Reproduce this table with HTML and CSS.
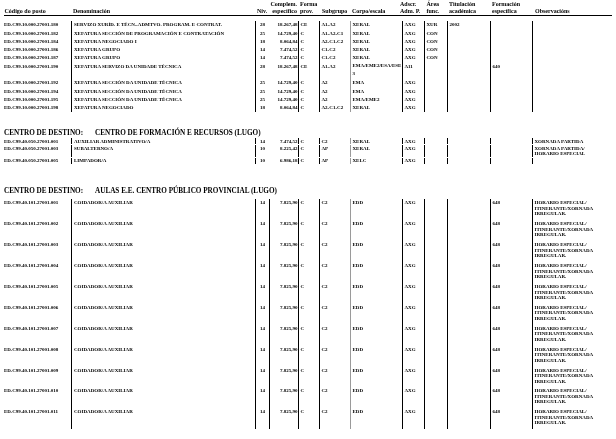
FILE: index.html
```html
<!DOCTYPE html>
<html lang="gl">
<head>
<meta charset="utf-8">
<title>Relación de postos</title>
<link rel="stylesheet" href="styles.css">
</head>
<body>
<div class="page">
  <div class="grid head">
    <div class="h code"><span>&nbsp;</span><span>Código do posto</span></div>
    <div class="h den"><span>&nbsp;</span><span>Denominación</span></div>
    <div class="h niv"><span>&nbsp;</span><span>Niv.</span></div>
    <div class="h cmp"><span>Complem.</span><span>específico</span></div>
    <div class="h fp"><span>Forma</span><span>prov.</span></div>
    <div class="h sg"><span>&nbsp;</span><span>Subgrupo</span></div>
    <div class="h ce"><span>&nbsp;</span><span>Corpo/escala</span></div>
    <div class="h ad"><span>Adscr.</span><span>Adm. P.</span></div>
    <div class="h ar"><span>Área</span><span>func.</span></div>
    <div class="h ti"><span>Titulación</span><span>académica</span></div>
    <div class="h fe"><span>Formación</span><span>específica</span></div>
    <div class="h ob"><span>&nbsp;</span><span>Observacións</span></div>
  </div>

  <div class="block b1">
    <div class="grid row"><span class="c code">ED.C99.10.000.27001.180</span><span class="c den">SERVIZO XURÍD. E TÉCN.-ADMTVO. PROGRAM. E CONTRAT.</span><span class="c niv">28</span><span class="c cmp">18.267,48</span><span class="c fp">CE</span><span class="c sg">A1-A2</span><span class="c ce">XERAL</span><span class="c ad">AXG</span><span class="c ar">XUR</span><span class="c ti">2002</span><span class="c fe"></span><span class="c ob"></span></div>
    <div class="grid row"><span class="c code">ED.C99.10.000.27001.182</span><span class="c den">XEFATURA SECCIÓN DE PROGRAMACIÓN E CONTRATACIÓN</span><span class="c niv">25</span><span class="c cmp">14.729,40</span><span class="c fp">C</span><span class="c sg">A1-A2-C1</span><span class="c ce">XERAL</span><span class="c ad">AXG</span><span class="c ar">CON</span><span class="c ti"></span><span class="c fe"></span><span class="c ob"></span></div>
    <div class="grid row"><span class="c code">ED.C99.10.000.27001.184</span><span class="c den">XEFATURA NEGOCIADO I</span><span class="c niv">18</span><span class="c cmp">8.064,84</span><span class="c fp">C</span><span class="c sg">A2-C1-C2</span><span class="c ce">XERAL</span><span class="c ad">AXG</span><span class="c ar">CON</span><span class="c ti"></span><span class="c fe"></span><span class="c ob"></span></div>
    <div class="grid row"><span class="c code">ED.C99.10.000.27001.186</span><span class="c den">XEFATURA GRUPO</span><span class="c niv">14</span><span class="c cmp">7.474,52</span><span class="c fp">C</span><span class="c sg">C1-C2</span><span class="c ce">XERAL</span><span class="c ad">AXG</span><span class="c ar">CON</span><span class="c ti"></span><span class="c fe"></span><span class="c ob"></span></div>
    <div class="grid row"><span class="c code">ED.C99.10.000.27001.187</span><span class="c den">XEFATURA GRUPO</span><span class="c niv">14</span><span class="c cmp">7.474,52</span><span class="c fp">C</span><span class="c sg">C1-C2</span><span class="c ce">XERAL</span><span class="c ad">AXG</span><span class="c ar">CON</span><span class="c ti"></span><span class="c fe"></span><span class="c ob"></span></div>
    <div class="grid row tall"><span class="c code">ED.C99.10.000.27001.190</span><span class="c den">XEFATURA SERVIZO DA UNIDADE TÉCNICA</span><span class="c niv">28</span><span class="c cmp">18.267,48</span><span class="c fp">CE</span><span class="c sg">A1-A2</span><span class="c ce wrap">EMA/EME2/ESA/ESE<br>3</span><span class="c ad">A11</span><span class="c ar"></span><span class="c ti"></span><span class="c fe">640</span><span class="c ob"></span></div>
    <div class="grid row"><span class="c code">ED.C99.10.000.27001.192</span><span class="c den">XEFATURA SECCIÓN DA UNIDADE TÉCNICA</span><span class="c niv">25</span><span class="c cmp">14.729,40</span><span class="c fp">C</span><span class="c sg">A2</span><span class="c ce">EMA</span><span class="c ad">AXG</span><span class="c ar"></span><span class="c ti"></span><span class="c fe"></span><span class="c ob"></span></div>
    <div class="grid row"><span class="c code">ED.C99.10.000.27001.194</span><span class="c den">XEFATURA SECCIÓN DA UNIDADE TÉCNICA</span><span class="c niv">25</span><span class="c cmp">14.729,40</span><span class="c fp">C</span><span class="c sg">A2</span><span class="c ce">EMA</span><span class="c ad">AXG</span><span class="c ar"></span><span class="c ti"></span><span class="c fe"></span><span class="c ob"></span></div>
    <div class="grid row"><span class="c code">ED.C99.10.000.27001.195</span><span class="c den">XEFATURA SECCIÓN DA UNIDADE TÉCNICA</span><span class="c niv">25</span><span class="c cmp">14.729,40</span><span class="c fp">C</span><span class="c sg">A2</span><span class="c ce">EMA/EME2</span><span class="c ad">AXG</span><span class="c ar"></span><span class="c ti"></span><span class="c fe"></span><span class="c ob"></span></div>
    <div class="grid row"><span class="c code">ED.C99.10.000.27001.198</span><span class="c den">XEFATURA NEGOCIADO</span><span class="c niv">18</span><span class="c cmp">8.064,84</span><span class="c fp">C</span><span class="c sg">A2-C1-C2</span><span class="c ce">XERAL</span><span class="c ad">AXG</span><span class="c ar"></span><span class="c ti"></span><span class="c fe"></span><span class="c ob"></span></div>
  </div>

  <div class="centro c1"><span class="lbl">CENTRO DE DESTINO:</span><span>CENTRO DE FORMACIÓN E RECURSOS (LUGO)</span></div>
  <div class="block b2">
    <div class="grid row"><span class="c code">ED.C99.40.050.27001.001</span><span class="c den">AUXILIAR ADMINISTRATIVO/A</span><span class="c niv">14</span><span class="c cmp">7.474,52</span><span class="c fp">C</span><span class="c sg">C2</span><span class="c ce">XERAL</span><span class="c ad">AXG</span><span class="c ar"></span><span class="c ti"></span><span class="c fe"></span><span class="c ob">XORNADA PARTIDA</span></div>
    <div class="grid row two"><span class="c code">ED.C99.40.050.27001.003</span><span class="c den">SUBALTERNO/A</span><span class="c niv">10</span><span class="c cmp">8.225,42</span><span class="c fp">C</span><span class="c sg">AP</span><span class="c ce">XERAL</span><span class="c ad">AXG</span><span class="c ar"></span><span class="c ti"></span><span class="c fe"></span><span class="c ob">XORNADA PARTIDA/<br>HORARIO ESPECIAL</span></div>
    <div class="grid row"><span class="c code">ED.C99.40.050.27001.005</span><span class="c den">LIMPADOR/A</span><span class="c niv">10</span><span class="c cmp">6.986,18</span><span class="c fp">C</span><span class="c sg">AP</span><span class="c ce">XELC</span><span class="c ad">AXG</span><span class="c ar"></span><span class="c ti"></span><span class="c fe"></span><span class="c ob"></span></div>
  </div>

  <div class="centro c2"><span class="lbl">CENTRO DE DESTINO:</span><span>AULAS E.E. CENTRO PÚBLICO PROVINCIAL (LUGO)</span></div>
  <div class="block b3">
    <div class="grid row"><span class="c code">ED.C99.40.101.27001.001</span><span class="c den">COIDADOR/A AUXILIAR</span><span class="c niv">14</span><span class="c cmp">7.825,90</span><span class="c fp">C</span><span class="c sg">C2</span><span class="c ce">EDD</span><span class="c ad">AXG</span><span class="c ar"></span><span class="c ti"></span><span class="c fe">648</span><span class="c ob">HORARIO ESPECIAL/<br>ITINERANTE/XORNADA<br>IRREGULAR.</span></div>
    <div class="grid row"><span class="c code">ED.C99.40.101.27001.002</span><span class="c den">COIDADOR/A AUXILIAR</span><span class="c niv">14</span><span class="c cmp">7.825,90</span><span class="c fp">C</span><span class="c sg">C2</span><span class="c ce">EDD</span><span class="c ad">AXG</span><span class="c ar"></span><span class="c ti"></span><span class="c fe">648</span><span class="c ob">HORARIO ESPECIAL/<br>ITINERANTE/XORNADA<br>IRREGULAR.</span></div>
    <div class="grid row"><span class="c code">ED.C99.40.101.27001.003</span><span class="c den">COIDADOR/A AUXILIAR</span><span class="c niv">14</span><span class="c cmp">7.825,90</span><span class="c fp">C</span><span class="c sg">C2</span><span class="c ce">EDD</span><span class="c ad">AXG</span><span class="c ar"></span><span class="c ti"></span><span class="c fe">648</span><span class="c ob">HORARIO ESPECIAL/<br>ITINERANTE/XORNADA<br>IRREGULAR.</span></div>
    <div class="grid row"><span class="c code">ED.C99.40.101.27001.004</span><span class="c den">COIDADOR/A AUXILIAR</span><span class="c niv">14</span><span class="c cmp">7.825,90</span><span class="c fp">C</span><span class="c sg">C2</span><span class="c ce">EDD</span><span class="c ad">AXG</span><span class="c ar"></span><span class="c ti"></span><span class="c fe">648</span><span class="c ob">HORARIO ESPECIAL/<br>ITINERANTE/XORNADA<br>IRREGULAR.</span></div>
    <div class="grid row"><span class="c code">ED.C99.40.101.27001.005</span><span class="c den">COIDADOR/A AUXILIAR</span><span class="c niv">14</span><span class="c cmp">7.825,90</span><span class="c fp">C</span><span class="c sg">C2</span><span class="c ce">EDD</span><span class="c ad">AXG</span><span class="c ar"></span><span class="c ti"></span><span class="c fe">648</span><span class="c ob">HORARIO ESPECIAL/<br>ITINERANTE/XORNADA<br>IRREGULAR.</span></div>
    <div class="grid row"><span class="c code">ED.C99.40.101.27001.006</span><span class="c den">COIDADOR/A AUXILIAR</span><span class="c niv">14</span><span class="c cmp">7.825,90</span><span class="c fp">C</span><span class="c sg">C2</span><span class="c ce">EDD</span><span class="c ad">AXG</span><span class="c ar"></span><span class="c ti"></span><span class="c fe">648</span><span class="c ob">HORARIO ESPECIAL/<br>ITINERANTE/XORNADA<br>IRREGULAR.</span></div>
    <div class="grid row"><span class="c code">ED.C99.40.101.27001.007</span><span class="c den">COIDADOR/A AUXILIAR</span><span class="c niv">14</span><span class="c cmp">7.825,90</span><span class="c fp">C</span><span class="c sg">C2</span><span class="c ce">EDD</span><span class="c ad">AXG</span><span class="c ar"></span><span class="c ti"></span><span class="c fe">648</span><span class="c ob">HORARIO ESPECIAL/<br>ITINERANTE/XORNADA<br>IRREGULAR.</span></div>
    <div class="grid row"><span class="c code">ED.C99.40.101.27001.008</span><span class="c den">COIDADOR/A AUXILIAR</span><span class="c niv">14</span><span class="c cmp">7.825,90</span><span class="c fp">C</span><span class="c sg">C2</span><span class="c ce">EDD</span><span class="c ad">AXG</span><span class="c ar"></span><span class="c ti"></span><span class="c fe">648</span><span class="c ob">HORARIO ESPECIAL/<br>ITINERANTE/XORNADA<br>IRREGULAR.</span></div>
    <div class="grid row"><span class="c code">ED.C99.40.101.27001.009</span><span class="c den">COIDADOR/A AUXILIAR</span><span class="c niv">14</span><span class="c cmp">7.825,90</span><span class="c fp">C</span><span class="c sg">C2</span><span class="c ce">EDD</span><span class="c ad">AXG</span><span class="c ar"></span><span class="c ti"></span><span class="c fe">648</span><span class="c ob">HORARIO ESPECIAL/<br>ITINERANTE/XORNADA<br>IRREGULAR.</span></div>
    <div class="grid row"><span class="c code">ED.C99.40.101.27001.010</span><span class="c den">COIDADOR/A AUXILIAR</span><span class="c niv">14</span><span class="c cmp">7.825,90</span><span class="c fp">C</span><span class="c sg">C2</span><span class="c ce">EDD</span><span class="c ad">AXG</span><span class="c ar"></span><span class="c ti"></span><span class="c fe">648</span><span class="c ob">HORARIO ESPECIAL/<br>ITINERANTE/XORNADA<br>IRREGULAR.</span></div>
    <div class="grid row"><span class="c code">ED.C99.40.101.27001.011</span><span class="c den">COIDADOR/A AUXILIAR</span><span class="c niv">14</span><span class="c cmp">7.825,90</span><span class="c fp">C</span><span class="c sg">C2</span><span class="c ce">EDD</span><span class="c ad">AXG</span><span class="c ar"></span><span class="c ti"></span><span class="c fe">648</span><span class="c ob">HORARIO ESPECIAL/<br>ITINERANTE/XORNADA<br>IRREGULAR.</span></div>
  </div>
</div>
</body>
</html>
```

FILE: styles.css
```css
* {
  box-sizing: border-box;
  margin: 0;
  padding: 0;
}

html, body {
  background: #ffffff;
}

body {
  margin: 0;
  color: #000000;
  font-family: "Liberation Serif", "Times New Roman", serif;
  font-weight: bold;
  overflow: hidden;
}

.page {
  width: 616px;
  height: 439px;
  padding: 0 4px;
  background: #ffffff;
  filter: grayscale(1);
}

.grid {
  display: grid;
  grid-template-columns: 67px 184px 14px 29px 21px 31px 52px 22px 23px 43px 42px 80px;
  width: 608px;
}

/* ---------- column header ---------- */
.head {
  padding-top: 1px;
  border-bottom: 1px solid #000000;
  font-size: 6px;
  line-height: 6.8px;
  height: 15.6px;
}

.h {
  display: flex;
  flex-direction: column;
  white-space: nowrap;
}

.h span {
  display: block;
  height: 6.8px;
}

.h.code { padding-left: 0.5px; }
.h.den { padding-left: 2px; }
.h.niv { padding-left: 2px; }
.h.cmp { align-items: flex-end; padding-right: 1px; }
.h.fp { padding-left: 2px; }
.h.sg { padding-left: 3px; }
.h.ce { padding-left: 2px; }
.h.ad { margin-left: -2px; }
.h.ar { padding-left: 2.5px; }
.h.ti { padding-left: 2px; }
.h.fe { padding-left: 2px; }
.h.ob { padding-left: 3px; }

/* ---------- data rows ---------- */
.c {
  display: block;
  font-size: 5px;
  line-height: 5.5px;
  white-space: nowrap;
  padding-left: 1.5px;
}

.c.code { padding-left: 0; }
.c.den { padding-left: 2px; }
.c.niv { text-align: center; padding-left: 0; }
.c.cmp { text-align: right; padding-left: 0; padding-right: 0.5px; }
.c.fp { padding-left: 1.5px; }

.c.den,
.c.niv,
.c.fp,
.c.sg,
.c.ad,
.c.ar,
.c.ti,
.c.fe,
.c.ob {
  border-left: 1px solid #000000;
}

.c.ce {
  border-left: 1px solid #9a9a9a;
}

/* block 1 : first table */
.b1 {
  margin-top: 5.4px;
}

.b1 .row {
  height: 8.3px;
}

.b1 .row.tall {
  height: 16.6px;
}

.b1 .c {
  padding-top: 1.25px;
}

.b1 .c.wrap {
  padding-top: 0;
  line-height: 8px;
}

/* centre headings */
.centro {
  font-size: 7.2px;
  line-height: 9px;
  height: 9px;
  white-space: nowrap;
}

.centro .lbl {
  display: inline-block;
  width: 91px;
}

.c1 {
  margin-top: 17.2px;
}

.c2 {
  margin-top: 23.5px;
  margin-bottom: 3px;
}

/* block 2 */
.b2 .row {
  height: 6px;
  margin-bottom: 1px;
}

.b2 .row.two {
  height: 11.5px;
}

.b2 .c {
  padding-top: 0.5px;
}

/* block 3 */
.b3 .row {
  height: 20.9px;
}

.b3 .c {
  padding-top: 1px;
}

.b3 .c.cmp {
  border-left: 1px solid #000000;
}
```
